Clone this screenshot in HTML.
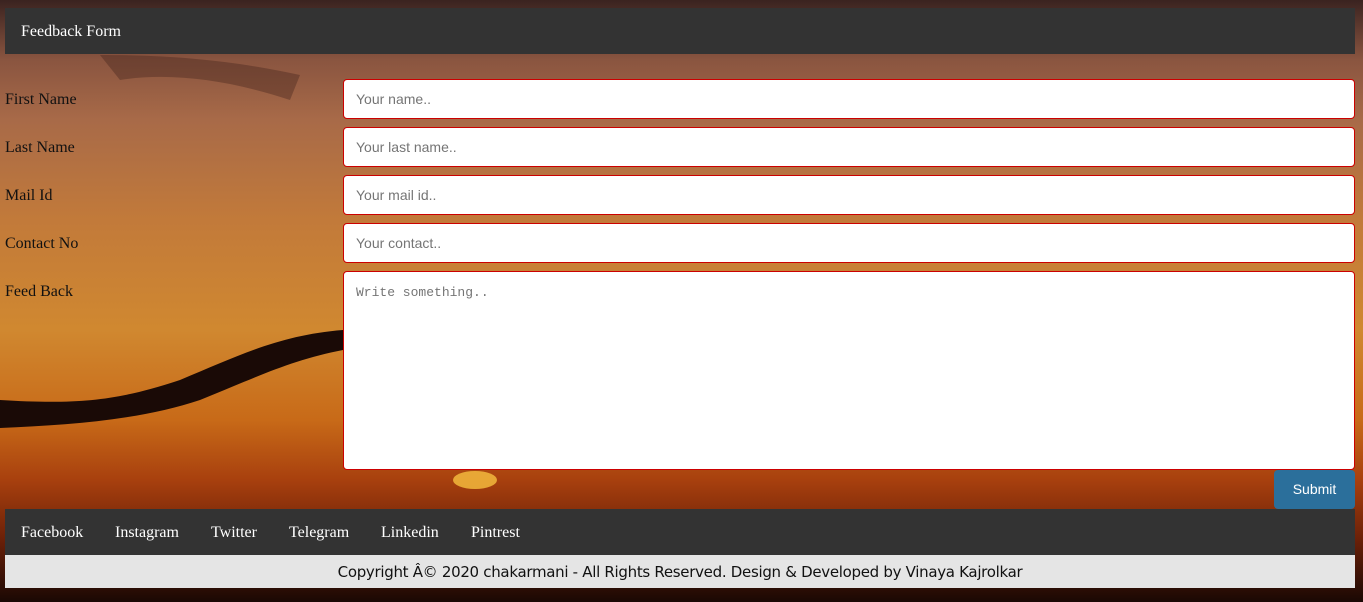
<!DOCTYPE html>
<html><head><meta charset="utf-8"><style>
*{box-sizing:border-box;margin:0;padding:0}
body{width:1363px;height:602px;overflow:hidden;position:relative;font-family:"Liberation Serif",serif;
background:linear-gradient(180deg,#3a2320 0px,#8a5540 60px,#a86a48 120px,#c27a3a 220px,#d08830 330px,#c86a18 420px,#a8400e 480px,#6a2008 540px,#1a0804 602px);}
svg.bg{position:absolute;left:0;top:0}
.hdr{position:absolute;left:5px;top:8px;width:1350px;height:46px;background:#333;color:#fff;font-size:16px;padding:15px 16px}
.lbl{position:absolute;left:5px;font-size:16px;color:#111}
.in{position:absolute;left:343px;width:1012px;height:40px;background:#fff;border:1px solid #c00;border-radius:4px;font-family:"Liberation Sans",sans-serif;font-size:14px;color:#757575;padding:11px 12px}
.ta{height:199px;font-family:"Liberation Mono",monospace;font-size:13px;padding:13px 12px}
.btn{position:absolute;left:1274px;top:470px;width:81px;height:39px;background:#2b6f9b;color:#fff;border-radius:4px;font-family:"Liberation Sans",sans-serif;font-size:14px;text-align:center;line-height:39px}
.nav{position:absolute;left:5px;top:509px;width:1350px;height:46px;background:#333;color:#fff;font-size:16px}
.nav span{position:absolute;top:15px}
.cp{position:absolute;left:5px;top:555px;width:1350px;height:33px;background:#e5e5e5;color:#111;font-family:"Comic Sans MS","DejaVu Sans",sans-serif;font-size:15px;text-align:center;line-height:35px;letter-spacing:-0.3px}
</style></head><body>
<svg class="bg" width="1363" height="602">
<path d="M0 400 C80 405 120 400 180 380 C240 355 280 335 343 330 L343 350 C290 360 250 380 200 400 C140 420 70 425 0 428Z" fill="#1a0a06"/>
<path d="M100 55 C180 55 240 62 300 75 L290 100 C230 80 170 72 120 80Z" fill="#3a1e18" opacity=".35"/>
<ellipse cx="475" cy="480" rx="22" ry="9" fill="#f8c040" opacity=".8"/>
</svg>
<div class="hdr">Feedback Form</div>
<div class="lbl" style="top:91px">First Name</div>
<div class="lbl" style="top:139px">Last Name</div>
<div class="lbl" style="top:187px">Mail Id</div>
<div class="lbl" style="top:235px">Contact No</div>
<div class="lbl" style="top:283px">Feed Back</div>
<div class="in" style="top:79px">Your name..</div>
<div class="in" style="top:127px">Your last name..</div>
<div class="in" style="top:175px">Your mail id..</div>
<div class="in" style="top:223px">Your contact..</div>
<div class="in ta" style="top:271px">Write something..</div>
<div class="btn">Submit</div>
<div class="nav"><span style="left:16px">Facebook</span><span style="left:110px">Instagram</span><span style="left:206px">Twitter</span><span style="left:284px">Telegram</span><span style="left:376px">Linkedin</span><span style="left:466px">Pintrest</span></div>
<div class="cp">Copyright Â© 2020 chakarmani - All Rights Reserved. Design &amp; Developed by Vinaya Kajrolkar</div>
</body></html>
